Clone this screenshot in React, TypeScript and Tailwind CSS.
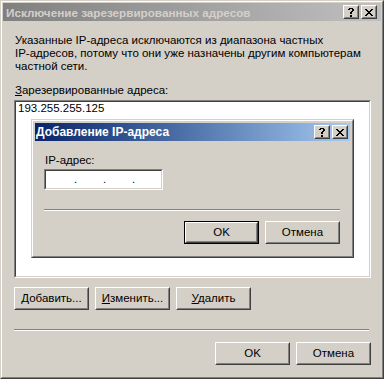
import React from "react";

const HelpGlyph = () => (
  <svg width="6" height="9" viewBox="0 0 6 9" shapeRendering="crispEdges">
    <rect x="1" y="0" width="4" height="1" fill="#000" />
    <rect x="0" y="1" width="2" height="1" fill="#000" />
    <rect x="4" y="1" width="2" height="2" fill="#000" />
    <rect x="3" y="3" width="2" height="1" fill="#000" />
    <rect x="2" y="4" width="2" height="2" fill="#000" />
    <rect x="2" y="7" width="2" height="2" fill="#000" />
  </svg>
);

const CloseGlyph = () => (
  <svg width="8" height="7" viewBox="0 0 8 7" shapeRendering="crispEdges">
    <rect x="0" y="0" width="2" height="1" fill="#000" />
    <rect x="6" y="0" width="2" height="1" fill="#000" />
    <rect x="1" y="1" width="2" height="1" fill="#000" />
    <rect x="5" y="1" width="2" height="1" fill="#000" />
    <rect x="2" y="2" width="4" height="1" fill="#000" />
    <rect x="3" y="3" width="2" height="1" fill="#000" />
    <rect x="2" y="4" width="4" height="1" fill="#000" />
    <rect x="1" y="5" width="2" height="1" fill="#000" />
    <rect x="5" y="5" width="2" height="1" fill="#000" />
    <rect x="0" y="6" width="2" height="1" fill="#000" />
    <rect x="6" y="6" width="2" height="1" fill="#000" />
  </svg>
);

const CaptionButton = ({ children }: { children: React.ReactNode }) => (
  <div className="w-[16px] h-[14px] bg-[#d4d0c8] border border-t-white border-l-white border-r-[#404040] border-b-[#404040]">
    <div className="w-full h-full border border-t-[#d4d0c8] border-l-[#d4d0c8] border-r-[#808080] border-b-[#808080] flex items-center justify-center">
      {children}
    </div>
  </div>
);

const Btn = ({ children, isDefault = false }: { children: React.ReactNode; isDefault?: boolean }) => {
  const inner = (
    <div className="w-full h-full bg-[#d4d0c8] border border-t-white border-l-white border-r-[#404040] border-b-[#404040]">
      <div className="w-full h-full border border-t-[#d4d0c8] border-l-[#d4d0c8] border-r-[#808080] border-b-[#808080] flex items-center justify-center text-[11.5px] leading-[13px] text-black">
        {children}
      </div>
    </div>
  );
  if (isDefault) {
    return <div className="w-[75px] h-[23px] border border-black">{inner}</div>;
  }
  return <div className="w-[75px] h-[23px]">{inner}</div>;
};

const Separator = ({ className = "" }: { className?: string }) => (
  <div className={"h-[2px] border-t border-t-[#808080] border-b border-b-white " + className} />
);

export default function App() {
  return (
    <div className="w-[384px] h-[379px] bg-[#d4d0c8] font-['Liberation_Sans',Arial,sans-serif] text-[11.5px] text-black border border-t-[#d4d0c8] border-l-[#d4d0c8] border-r-[#404040] border-b-[#404040]">
      <div className="w-full h-full flex flex-col p-px border border-t-white border-l-white border-r-[#808080] border-b-[#808080]">
        {/* Title bar (inactive) */}
        <div className="h-[18px] shrink-0 flex items-center pl-[3px] pr-[4px] bg-gradient-to-r from-[#808080] to-[#c0c0c0]">
          <span className="flex-1 font-bold text-[11.7px] leading-[13px] text-[#d4d0c8] whitespace-nowrap">
            Исключение зарезервированных адресов
          </span>
          <div className="flex gap-[2px]">
            <CaptionButton>
              <HelpGlyph />
            </CaptionButton>
            <CaptionButton>
              <CloseGlyph />
            </CaptionButton>
          </div>
        </div>

        {/* Client */}
        <div className="flex-1 flex flex-col pl-[11px] pr-[10px] pt-[13px]">
          <p className="leading-[13px] pl-px whitespace-nowrap">
            Указанные IP-адреса исключаются из диапазона частных
            <br />
            IP-адресов, потому что они уже назначены другим компьютерам
            <br />
            частной сети.
          </p>
          <div className="mt-[11px] leading-[13px] pl-px">
            <u>З</u>арезервированные адреса:
          </div>

          {/* List box */}
          <div className="relative mt-[3px] h-[178px] border border-t-[#808080] border-l-[#808080] border-r-white border-b-white">
            <div className="w-full h-full bg-white border border-t-[#404040] border-l-[#404040] border-r-[#d4d0c8] border-b-[#d4d0c8]">
              <div className="pl-[2px] leading-[13px]">193.255.255.125</div>
            </div>

            {/* Add IP dialog window */}
            <div className="absolute left-[16px] top-[18px] w-[323px] h-[139px] border border-t-[#d4d0c8] border-l-[#d4d0c8] border-r-[#404040] border-b-[#404040] bg-[#d4d0c8]">
              <div className="w-full h-full flex flex-col p-[2px] border border-t-white border-l-white border-r-[#808080] border-b-[#808080]">
                <div className="h-[18px] shrink-0 flex items-center pl-[1px] pr-[2px] bg-gradient-to-r from-[#0a246a] to-[#a6caf0]">
                  <span className="flex-1 font-bold text-[12px] leading-[13px] text-white whitespace-nowrap">
                    Добавление IP-адреса
                  </span>
                  <div className="flex gap-[2px]">
                    <CaptionButton>
                      <HelpGlyph />
                    </CaptionButton>
                    <CaptionButton>
                      <CloseGlyph />
                    </CaptionButton>
                  </div>
                </div>
                <div className="flex-1 flex flex-col pl-[9px] pr-[10px] pt-[13px]">
                  <div className="leading-[13px] pl-px">IP-адрес:</div>
                  <div className="mt-[2px] w-[119px] h-[21px] border border-t-[#808080] border-l-[#808080] border-r-white border-b-white">
                    <div className="w-full h-full bg-white border border-t-[#404040] border-l-[#404040] border-r-[#d4d0c8] border-b-[#d4d0c8] flex items-end pb-[2px] leading-[13px]">
                      <span className="w-[28px]" />
                      <span className="w-[3px]">.</span>
                      <span className="w-[26px]" />
                      <span className="w-[3px]">.</span>
                      <span className="w-[26px]" />
                      <span className="w-[3px]">.</span>
                    </div>
                  </div>
                  <Separator className="mt-[19px]" />
                  <div className="mt-[10px] flex justify-end gap-[6px]">
                    <Btn isDefault>OK</Btn>
                    <Btn>Отмена</Btn>
                  </div>
                </div>
              </div>
            </div>
          </div>

          <div className="mt-[9px] flex gap-[6px]">
            <Btn>
              <span>
                <u>Д</u>обавить...
              </span>
            </Btn>
            <Btn>
              <span>
                <u>И</u>зменить...
              </span>
            </Btn>
            <Btn>
              <span>
                <u>У</u>далить
              </span>
            </Btn>
          </div>

          <Separator className="mt-[19px] mr-[2px]" />

          <div className="mt-[11px] flex justify-end gap-[6px]">
            <Btn>OK</Btn>
            <Btn>Отмена</Btn>
          </div>
        </div>
      </div>
    </div>
  );
}
